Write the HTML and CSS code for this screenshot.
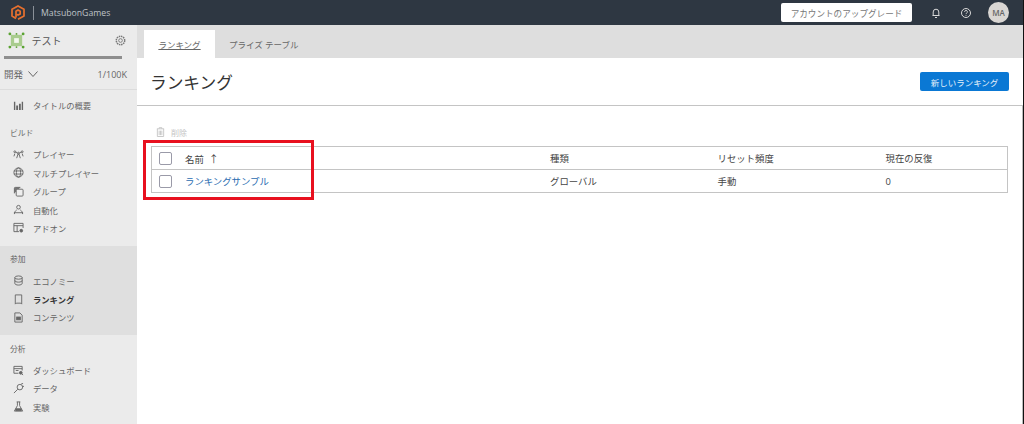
FILE: index.html
```html
<!DOCTYPE html>
<html lang="ja">
<head>
<meta charset="utf-8">
<title>ランキング</title>
<link rel="stylesheet" href="styles.css">
</head>
<body>
<header class="topbar">
  <svg class="logo" width="14" height="15" viewBox="0 0 14 15" fill="none" stroke="#e8702e" stroke-width="1.700" stroke-linejoin="round"><path d="M5 13.400 1 11V4.200L7 .9l6 3.300V11l-6 3.200"/><path d="M5 12.500V6.200L7 5l2.200 1.300v2.600L7 10.100 5.800 9.500"/></svg>
  <span class="topbar-sep"></span>
  <span class="studio">MatsubonGames</span>
  <span class="topbar-spacer"></span>
  <button class="upgrade">アカウントのアップグレード</button>
  <svg class="bell" width="12" height="12" viewBox="0 0 12 12" fill="none" stroke="#d8d8d8" stroke-width="1"><path d="M3.200 8.500V5a2.800 2.800 0 0 1 5.600 0v3.500zM2.500 8.500h7M5 10.500h2"/></svg>
  <svg class="help" width="12" height="12" viewBox="0 0 12 12" fill="none" stroke="#d8d8d8" stroke-width="1"><circle cx="6" cy="6" r="4.500"/><path d="M4.600 4.800a1.400 1.400 0 1 1 2 1.300c-.4.200-.6.500-.6 1M6 8v.8"/></svg>
  <span class="avatar">MA</span>
</header>
<div class="shell">
  <aside class="sidebar">
    <div class="title-row">
      <svg class="title-icon" width="17" height="17" viewBox="0 0 18 18"><rect x="3" y="3" width="12" height="12" fill="#a9cc8e"/><rect x="6.500" y="6.500" width="5" height="5" fill="#f3f7ee"/><g fill="#5aa332"><circle cx="2" cy="2" r="1.500"/><circle cx="16" cy="2" r="1.500"/><circle cx="2" cy="16" r="1.500"/><circle cx="16" cy="16" r="1.500"/><circle cx="9" cy="2" r="1"/><circle cx="9" cy="16" r="1"/></g></svg>
      <span class="title-name">テスト</span>
      <svg class="gear" width="11" height="11" viewBox="0 0 12 12" fill="none" stroke="#777" stroke-width="1"><circle cx="6" cy="6" r="2"/><circle cx="6" cy="6" r="4.600" stroke-dasharray="1.600 .8" stroke-width="1.600"/></svg>
    </div>
    <div class="meter"></div>
    <div class="env-row">
      <span class="env">開発</span>
      <svg class="env-caret" width="10" height="6" viewBox="0 0 10 6" fill="none" stroke="#666"><path d="m.5.500 4.500 5 4.500-5"/></svg>
      <span class="env-count">1/100K</span>
    </div>
    <nav class="nav-top">
      <a class="nav-item"><svg class="nav-icon" viewBox="0 0 12 12" fill="#666"><path d="M1 2h1.500v9H1zM3.500 6h2v5h-2zM6.500 4h2v7h-2zM9.500 2H11v9H9.500z"/></svg>タイトルの概要</a>
    </nav>
    <section class="nav-group">
      <h2 class="nav-heading">ビルド</h2>
      <a class="nav-item"><svg class="nav-icon" viewBox="0 0 12 12" fill="none" stroke="#666"><circle cx="2" cy="3" r="1"/><circle cx="10" cy="3" r="1"/><circle cx="6" cy="4.500" r="1"/><path d="M3 3.500 5 4.500M9 3.500 7 4.500M1 8l1-3M11 8l-1-3M4 10l1.500-4.500h1L8 10"/></svg>プレイヤー</a>
      <a class="nav-item"><svg class="nav-icon" viewBox="0 0 12 12" fill="none" stroke="#666"><circle cx="6" cy="6" r="5"/><ellipse cx="6" cy="6" rx="2.300" ry="5"/><path d="M1 4.300h10M1 7.700h10"/></svg>マルチプレイヤー</a>
      <a class="nav-item"><svg class="nav-icon" viewBox="0 0 12 12" fill="none" stroke="#666"><path d="M1.500 8V2.500a1 1 0 0 1 1-1H8" fill="#777"/><rect x="3.500" y="3.500" width="7.500" height="7.500" rx="1" fill="#eee"/></svg>グループ</a>
      <a class="nav-item"><svg class="nav-icon" viewBox="0 0 12 12" fill="none" stroke="#666"><circle cx="6" cy="3.500" r="2"/><path d="M1.500 11c0-2 1-3.500 2.500-4.500M10.500 11c0-2-1-3.500-2.500-4.500M1 9.500h10"/></svg>自動化</a>
      <a class="nav-item"><svg class="nav-icon" viewBox="0 0 12 12" fill="none" stroke="#666"><path d="M6.500 10.500H1v-9h10v5M1 4h10M4.500 4v6.500"/><circle cx="9" cy="9.500" r="1.500" fill="#666"/></svg>アドオン</a>
    </section>
    <section class="nav-group nav-group-active">
      <h2 class="nav-heading">参加</h2>
      <a class="nav-item"><svg class="nav-icon" viewBox="0 0 12 12" fill="none" stroke="#666"><ellipse cx="6" cy="2.800" rx="4" ry="1.800"/><path d="M2 2.800v6.400c0 1 1.800 1.800 4 1.800s4-.8 4-1.800V2.800M2 6c0 1 1.800 1.800 4 1.800s4-.8 4-1.800"/></svg>エコノミー</a>
      <a class="nav-item nav-item-current"><svg class="nav-icon" viewBox="0 0 12 12" fill="none" stroke="#666"><path d="M2.500 1h7v10l-1-1h-5l-1 1z"/></svg>ランキング</a>
      <a class="nav-item"><svg class="nav-icon" viewBox="0 0 12 12" fill="none" stroke="#666"><path d="M2 1h5.500L10 3.500V11H2z"/><rect x="4" y="5.500" width="4" height="3" fill="#666"/></svg>コンテンツ</a>
    </section>
    <section class="nav-group">
      <h2 class="nav-heading">分析</h2>
      <a class="nav-item"><svg class="nav-icon" viewBox="0 0 12 12" fill="none" stroke="#666"><path d="M6 9H1V1.500h9V6M1 4h9M3 6h3"/><circle cx="8.500" cy="8.500" r="1.500" fill="#666"/><path d="m9.500 9.500 1.500 1.500"/></svg>ダッシュボード</a>
      <a class="nav-item"><svg class="nav-icon" viewBox="0 0 12 12" fill="none" stroke="#666"><circle cx="7.500" cy="4.500" r="3"/><path d="M5.200 6.800 1 11M9 1l2-.5M10.500 4 12 3.500"/></svg>データ</a>
      <a class="nav-item"><svg class="nav-icon" viewBox="0 0 12 12" fill="none" stroke="#666"><path d="M4 1h4M4.800 1v4L1.500 11h9L7.200 5V1"/><path d="M3 8.500h6v2H3z" fill="#666"/></svg>実験</a>
    </section>
  </aside>
  <main class="main">
    <div class="tabs">
      <a class="tab tab-active">ランキング</a>
      <a class="tab">プライズ テーブル</a>
    </div>
    <div class="page-head">
      <h1 class="page-title">ランキング</h1>
      <button class="primary">新しいランキング</button>
    </div>
    <div class="content">
      <div class="toolbar">
        <svg class="trash" width="9" height="10" viewBox="0 0 10 11" fill="none" stroke="#c4c4c4"><path d="M1 2h8M3.500 2V.7h3V2M1.500 2v8.500h7V2M3.500 4v5M5 4v5M6.500 4v5"/></svg>
        <span>削除</span>
      </div>
      <div class="table-wrap">
        <table class="table">
          <thead>
            <tr><th class="col-check"><span class="check"></span></th><th class="col-name">名前<span class="arrow">↑</span></th><th class="col-type">種類</th><th class="col-reset">リセット頻度</th><th>現在の反復</th></tr>
          </thead>
          <tbody>
            <tr><td class="col-check"><span class="check"></span></td><td class="col-name"><a class="link">ランキングサンプル</a></td><td class="col-type">グローバル</td><td class="col-reset">手動</td><td>0</td></tr>
          </tbody>
        </table>
        <div class="highlight"></div>
      </div>
    </div>
  </main>
</div>
</body>
</html>
```
FILE: styles.css
```css
* { box-sizing: border-box; }
html, body { height: 100%; }
body {
  margin: 0;
  display: flex;
  flex-direction: column;
  height: 424px;
  overflow: hidden;
  border-right: 1px solid #111;
  background: #fff;
  color: #333;
  font-family: "Open Sans", "Noto Sans CJK JP", sans-serif;
}
.topbar {
  flex: none;
  display: flex;
  align-items: center;
  height: 25px;
  padding-left: 11px;
  background: #2e3742;
}
.logo { flex: none; }
.topbar-sep { width: 1px; height: 14px; margin: 0 7px 0 8px; background: #8a9098; }
.studio { font-size: 8.700px; color: #bfc3c7; }
.topbar-spacer { flex: 1; }
.upgrade {
  width: 131px;
  height: 19px;
  padding: 0;
  border: 0;
  border-radius: 2px;
  background: #fff;
  color: #777;
  font: 8.600px "Noto Sans CJK JP", sans-serif;
}
.bell { margin-left: 18px; }
.help { margin-left: 18px; }
.avatar {
  width: 21px;
  height: 21px;
  margin: 0 14px 0 16px;
  border-radius: 50%;
  background: #d9d6d3;
  color: #666;
  font-size: 8px;
  font-weight: 600;
  line-height: 21px;
  text-align: center;
}
.shell { flex: 1; display: flex; min-height: 0; }
.sidebar {
  flex: none;
  width: 137px;
  background: #ebebeb;
  color: #666;
  font-size: 8.300px;
}
.title-row { display: flex; align-items: center; height: 31px; padding: 0 11px 0 8px; }
.title-name { flex: 1; margin-left: 6.500px; font-size: 10px; color: #555; }
.meter { height: 3px; margin: 0 15px 0 4px; background: #8e8e8e; }
.env-row { display: flex; align-items: center; height: 31px; padding: 0 10px 0 4px; border-bottom: 1px solid #dcdcdc; font-size: 9.500px; }
.env-caret { margin-left: 5px; }
.env-count { margin-left: auto; font-size: 9px; }
.nav-top { padding: 6px 0 5px; }
.nav-group { padding: 7.500px 0 0; }
.nav-group-active { margin-top: 9px; padding: 7px 0 8.500px; background: #dfdfdf; }
.nav-heading { margin: 0; height: 18.300px; padding-left: 10px; font-size: 7.800px; font-weight: 400; line-height: 12px; }
.nav-item { display: flex; align-items: center; height: 18.400px; padding-left: 13px; white-space: nowrap; }
.nav-item-current { color: #333; font-weight: 700; }
.nav-icon { flex: none; width: 11px; height: 11px; margin-right: 9px; }
.main { flex: 1; display: flex; flex-direction: column; min-width: 0; }
.tabs { flex: none; display: flex; align-items: flex-end; height: 33px; padding-left: 7px; background: #dedede; }
.tab { display: flex; align-items: center; justify-content: center; height: 28px; padding: 0 14px; font-size: 8.500px; color: #666; }
.tab-active { width: 71px; padding: 0; background: #fff; text-decoration: underline; }
.page-head {
  flex: none;
  display: flex;
  align-items: center;
  justify-content: space-between;
  height: 48px;
  padding: 0 14px 0 13px;
  border-bottom: 1px solid #c4c4c4;
}
.page-title { margin: 0; font-size: 16.700px; font-weight: 400; color: #333; }
.primary {
  width: 89px;
  height: 19px;
  padding: 0;
  border: 0;
  border-radius: 2px;
  background: #0a78d4;
  color: #e6f1fa;
  font: 8.500px "Noto Sans CJK JP", sans-serif;
}
.content { flex: 1; padding: 19px 14px 0 14px; border-right: 1px solid #bbb; }
.toolbar { display: flex; align-items: center; gap: 6px; height: 14px; padding-left: 5px; color: #c4c4c4; font-size: 8px; }
.table-wrap { position: relative; margin-top: 7px; }
.table {
  width: 100%;
  border-collapse: collapse;
  table-layout: fixed;
  border: 1px solid #c4c4c4;
  font-size: 9.400px;
  color: #444;
}
.table th, .table td { height: 23px; padding: 0; border-bottom: 1px solid #c4c4c4; font-weight: 400; text-align: left; }
.table .col-check { width: 33.500px; padding-left: 7px; }
.col-name { width: 365px; }
.col-type { width: 167.500px; }
.col-reset { width: 168px; }
.check {
  display: block;
  width: 13px;
  height: 13px;
  border: 1px solid #9a9aa8;
  border-radius: 2px;
  background: #fff;
}
.arrow { margin-left: 5px; font-size: 10px; }
.link { color: #2a6cb0; }
.highlight {
  position: absolute;
  left: -8px;
  top: -6px;
  width: 171px;
  height: 60px;
  border: 3px solid #e8101f;
  pointer-events: none;
}
```
